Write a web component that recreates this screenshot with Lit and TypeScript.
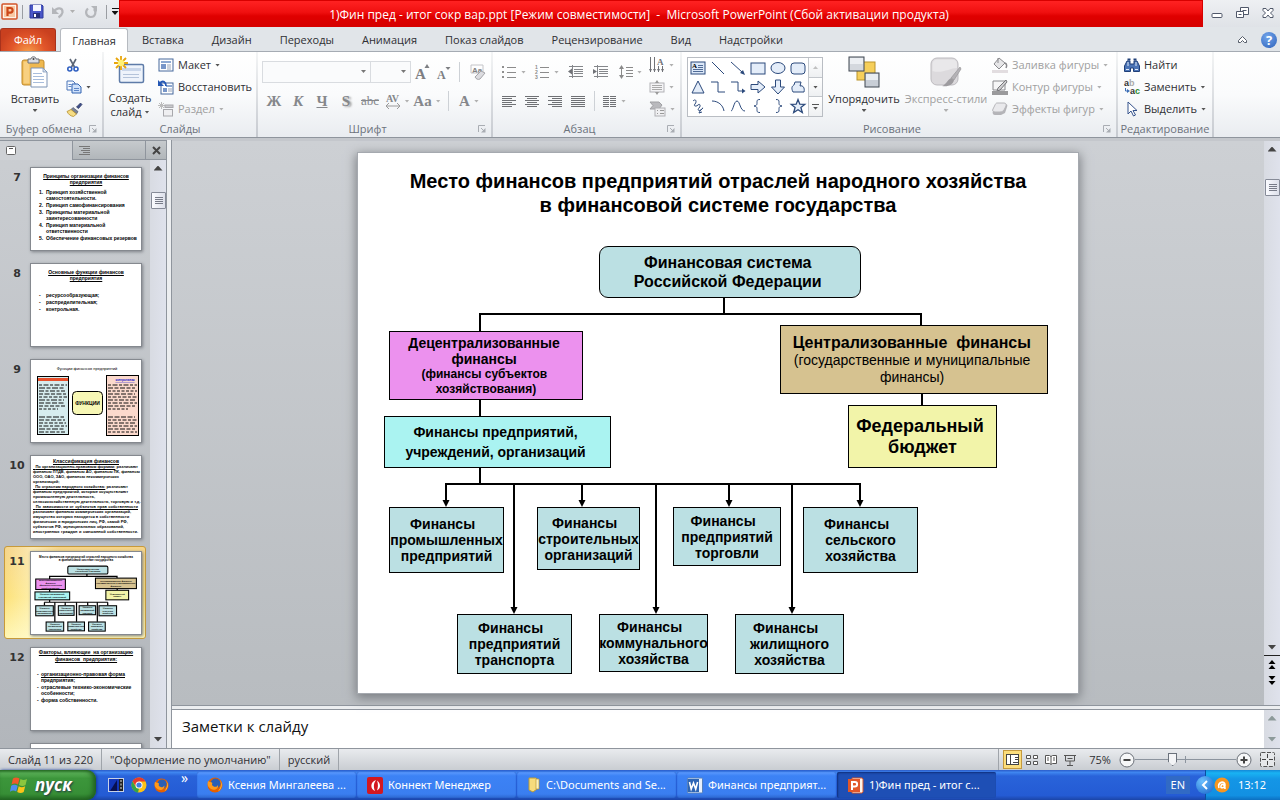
import { LitElement, html, svg, css } from "lit";
import { customElement } from "lit/decorators.js";
import { classMap } from "lit/directives/class-map.js";

const ic = (w: number, h: number, body: unknown) =>
  html`<svg class="ic" width=${w} height=${h} viewBox="0 0 ${w} ${h}" aria-hidden="true">${body}</svg>`;
const caret = html`<i class="caret"></i>`;

/* ---------- slide diagram data, in slide units (720 x 540) ---------- */
interface Node { x: number; y: number; w: number; h: number; kind: string; fill: string; lines: [string, string][]; }
const T = "#bbe0e3";
const leaf = (x: number, y: number, w: number, h: number, a: string, b: string): Node =>
  ({ x, y, w, h, kind: "leaf", fill: T, lines: [["Финансы  ", "l14"], [a, "l14"], [b, "l14"]] });
const NODES: Node[] = [
  { x: 241, y: 93, w: 262, h: 52, kind: "root", fill: T, lines: [["Финансовая система ", "l16"], ["Российской Федерации ", "l16"]] },
  { x: 31, y: 178, w: 194, h: 69, kind: "dec", fill: "#ec91ee", lines: [["Децентрализованные ", "l14"], ["финансы ", "l14"], ["(финансы субъектов ", "l12"], ["хозяйствования)", "l12"]] },
  { x: 422, y: 172, w: 268, h: 69, kind: "cen", fill: "#d6c290", lines: [["Централизованные  финансы ", "l16"], ["(государственные и муниципальные ", "l14n"], ["финансы) ", "l14n"]] },
  { x: 26, y: 263, w: 227, h: 52, kind: "ent", fill: "#aaf3f1", lines: [["Финансы предприятий, ", "l14w"], ["учреждений, организаций ", "l14w"]] },
  { x: 490, y: 252, w: 149, h: 63, kind: "fed", fill: "#f2f4a9", lines: [["Федеральный ", "l18"], ["бюджет", "l18"]] },
  leaf(31, 354, 115, 66, "промышленных", "предприятий"),
  leaf(179, 354, 103, 63, "строительных", "организаций"),
  leaf(315, 354, 108, 59, "предприятий", "торговли"),
  leaf(445, 354, 115, 66, "сельского", "хозяйства"),
  leaf(99, 461, 115, 60, "предприятий", "транспорта"),
  leaf(241, 461, 109, 58, "коммунального", "хозяйства"),
  leaf(377, 461, 109, 60, "жилищного", "хозяйства"),
];
const ARROWS: [number, number][] = [[88, 354], [224, 354], [371, 354], [502, 354], [156, 461], [298, 461], [434, 461]];
const LINKS = "M366 145V161M122 178V161H563V172M564 241V252M122 247V263M122 315V331M87 331H503";
const TITLE = ["Место финансов предприятий отраслей народного хозяйства", "в финансовой системе государства"];

const connectors = (sw: number) => svg`
  <path d=${LINKS} fill="none" stroke="#000" stroke-width=${sw}/>
  ${ARROWS.map(([x, y]) => svg`<path d="M${x} 331V${y - 5}" fill="none" stroke="#000" stroke-width=${sw}/>
  <path d="M${x - 3 - sw / 4} ${y - 7}h${6 + sw / 2}L${x} ${y}z"/>`)}`;

/* ---------- icons ---------- */
const G = "#9a9a9a";
const pptLogo = ic(17, 17, svg`<rect x="1" y="1" width="15" height="15" rx="1" fill="#fff3e8" stroke="#d2552a" stroke-width="1.500"/><rect x="3" y="3" width="11" height="11" fill="#f9c9a4"/><path d="M6.500 13V5h2.800a2.300 2.300 0 0 1 0 4.600H6.500" fill="none" stroke="#cc4718" stroke-width="2.200"/>`);
const pptTask = ic(17, 17, svg`<path d="M5 1h10l1 1v13l-1 1H5z" fill="#fff3e8" stroke="#d2552a"/><rect x="1" y="2" width="12" height="13" fill="#e2572a"/><path d="M5 13V5h2.800a2.300 2.300 0 0 1 0 4.600H5" fill="none" stroke="#fff" stroke-width="2"/>`);
const save = ic(15, 15, svg`<path d="M1 1h12l1 1v12H1z" fill="#4a57c8" stroke="#2e3a9c"/><rect x="4" y="1" width="8" height="6" fill="#f4f6ff"/><rect x="4" y="9" width="7" height="5" fill="#27307c"/><rect x="5" y="10" width="2" height="3" fill="#fff"/>`);
const undo = ic(14, 14, svg`<path d="M3 6.500C6 2 12 2.500 11.500 7.500 11 10 9 11.500 7.500 12.500" fill="none" stroke="#b4b6ba" stroke-width="2.200"/><path d="M1 2v7h7z" fill="#b4b6ba"/>`);
const redo = ic(14, 14, svg`<path d="M4 3.500C1 6 1.500 11.500 6.500 12c5 .3 6-5 3.500-8" fill="none" stroke="#b4b6ba" stroke-width="2.200"/><path d="M7 1h6v6z" fill="#b4b6ba"/>`);
const paste = ic(28, 32, svg`<rect x="1" y="4" width="22" height="25" rx="2" fill="#efb84e" stroke="#c08a2c"/><rect x="2.500" y="5.500" width="6" height="22" fill="#f8d081"/><path d="M7 3h3c0-3 5-3 5 0h3v4H7z" fill="#d9dce2" stroke="#6c7078"/><circle cx="12.500" cy="3" r="1" fill="#444"/><path d="M10 12h12l4 4v15H10z" fill="#fff" stroke="#7d93b5"/><path d="M12 17.500h9M12 20.500h11M12 23.500h11M12 26.500h11" stroke="#a8bddc"/><path d="M22 12v4h4z" fill="#d5e0f0" stroke="#7d93b5" stroke-width=".7"/>`);
const cut = ic(14, 14, svg`<path d="M4 1l4.500 8M10 1L5.500 9" stroke="#5b6575" stroke-width="1.600" fill="none"/><circle cx="3.800" cy="11" r="2" fill="none" stroke="#2f5fc0" stroke-width="1.600"/><circle cx="10" cy="11" r="2" fill="none" stroke="#2f5fc0" stroke-width="1.600"/>`);
const copy = ic(16, 14, svg`<path d="M1 1h6l2 2v7H1z" fill="#f3f8ff" stroke="#4b74b8"/><path d="M6 4h6l3 3v6H6z" fill="#cfe1fa" stroke="#3163b0"/><path d="M2.500 4.500h3M2.500 6.500h3M8 8.500h5M8 10.500h5" stroke="#5d86c8"/>`);
const brush = ic(17, 15, svg`<path d="M10.500 5l4-4 1.500 1.500-3.500 4z" fill="#3f4f8a" stroke="#27345e" stroke-width=".7"/><path d="M7 5.500l5 4-1.500 2.500L5 7.500z" fill="#7b8499" stroke="#444c60" stroke-width=".6"/><path d="M5 7.500l5.500 4.500-3 2.500c-3-.5-5-2-6.500-5z" fill="#f6dd84" stroke="#b48e2c" stroke-width=".8"/>`);
const newSlide = ic(32, 30, svg`<rect x="5.500" y="8.500" width="24" height="18" rx="1.500" fill="#eef3fb" stroke="#5e7ba8" stroke-width="1.500"/><path d="M8 12h19v3H8z" fill="#c9d6ea"/><path d="M9 18.500h16M9 21.500h16" stroke="#b4c3da"/><path d="M7 0v14M0 7h14M2 2l10 10M12 2L2 12" stroke="#e8a50c" stroke-width="1.800"/><circle cx="7" cy="7" r="3.200" fill="#fff176"/>`);
const layoutI = ic(16, 14, svg`<rect x="1" y="1" width="14" height="12" fill="#fff" stroke="#46689c"/><rect x="3" y="3" width="10" height="2" fill="#8ea9d2"/><rect x="3" y="6" width="5" height="5" fill="#7896c8"/><path d="M9 7h4M9 9h4M9 11h4" stroke="#9aa5b8"/>`);
const resetI = ic(16, 16, svg`<rect x="3" y="4" width="12" height="11" fill="#fff" stroke="#46689c"/><rect x="8" y="6" width="6" height="2" fill="#8ea9d2"/><rect x="5" y="9" width="4" height="4" fill="#7896c8"/><path d="M10 10h4M10 12h4" stroke="#9aa5b8"/><path d="M2 4c3-3 6-1 6 3" fill="none" stroke="#2457b4" stroke-width="1.800"/><path d="M0 1v6h6z" fill="#2457b4"/>`);
const sectionI = ic(16, 15, svg`<path d="M3.500 0v7M0 3.500h7M1 1l5 5M6 1L1 6" stroke="#bbb"/><rect x="7" y="3" width="8" height="2.500" fill="#c9c9cc" stroke="#a8a8ac"/><rect x="5.500" y="7.500" width="9" height="6.500" fill="#efeff1" stroke="#a8a8ac"/>`);
const growA = ic(15, 16, svg`<text x="0" y="15" font-family="Liberation Serif" font-weight="700" font-size="15" fill="#7d7f83">A</text><path d="M9.500 4L12 0l2.500 4z" fill="#7d7f83"/>`);
const shrinkA = ic(14, 16, svg`<text x="0" y="15" font-family="Liberation Serif" font-weight="700" font-size="12" fill="#7d7f83">A</text><path d="M8.500 3h5L11 6z" fill="#7d7f83"/>`);
const eraser = ic(17, 17, svg`<text x="2" y="9" font-family="Liberation Sans" font-size="8" font-weight="700" fill="#808080">Aa</text><path d="M1 1h12v8H1z" fill="none" stroke="#c4c4c8"/><path d="M5 13l6-6 4 2-5 6c-2 1-4 0-5-2z" fill="#dcdce0" stroke="#a4a4a8"/>`);
const listI = (num: boolean) => ic(15, 14, svg`${[2, 7, 12].map((y, i) => svg`${num ? svg`<text x="0" y=${y + 2} font-family="Liberation Sans" font-size="5" font-weight="700" fill="#8a8a8a">${i + 1}</text>` : svg`<rect x="0" y=${y - 1} width="2" height="2" fill="#909090"/>`}<path d="M5 ${y + 0.5}h9" stroke="#8c8c8c"/>`)}`);
const indentI = (right: boolean) => ic(16, 14, svg`<path d="M1 1.500h14M6 4.500h9M6 6.500h9M6 8.500h9M1 11.500h14M4.500 0v13" stroke="#85878b"/>${right ? svg`<path d="M0 4v5l4-2.500z" fill="#707277"/>` : svg`<path d="M4 3.500v6L0 6.500z" fill="#707277"/>`}`);
const spacingI = ic(15, 16, svg`<path d="M3.500 3v10" stroke="#8a8a8a"/><path d="M1 5l2.500-4L6 5zM1 11l2.500 4L6 11z" fill="#8a8a8a"/><path d="M8 3.500h7M8 6.500h7M8 9.500h7M8 12.500h7" stroke="#8a8a8a"/>`);
const dirI = ic(16, 16, svg`<path d="M1.500 0v15M5.500 0v15M9.500 9v6M13.500 9v6" stroke="#707277"/><path d="M0 12h3l-1.500 3zM4 12h3l-1.500 3zM8 12h3l-1.500 3zM12 12h3l-1.500 3z" fill="#707277"/><text x="8" y="8" font-family="Liberation Serif" font-size="9" font-weight="700" fill="#707277">A</text>`);
const valignI = ic(16, 15, svg`<rect x="1" y="3" width="14" height="9" fill="#f4f4f6" stroke="#b2b2b6"/><path d="M3 5.500h10M3 7.500h10M3 9.500h10" stroke="#aaa"/><path d="M6 3l2-3 2 3zM6 12l2 3 2-3z" fill="#999"/>`);
const smartI = ic(17, 16, svg`<path d="M1 1h9l3 3-3 4H1l3-3.500z" fill="#b9b9bd" stroke="#a0a0a4"/><rect x="6" y="7" width="10" height="8" fill="#efeff1" stroke="#b0b0b4"/><path d="M8 9.500h1M11 9.500h4M8 12.500h1M11 12.500h4" stroke="#999"/>`);
const alignI = (a: number, b: number) => ic(15, 13, svg`${[0, 1, 2, 3, 4, 5].map((i) => svg`<path d="M${i % 2 ? a : 0} ${i * 2 + 1.5}H${i % 2 ? b : 14}" stroke="#6f7175"/>`)}`);
const colsI = ic(14, 13, svg`${[1, 3, 5, 7, 9, 11].map((y) => svg`<path d="M0 ${y + 0.5}h6M7 ${y + 0.5}h6" stroke="#6f7175"/>`)}`);
const S = "#2c4a7c";
const SHAPES = [
  svg`<rect x="1" y="2" width="14" height="12" fill="#dce8f8" stroke=${S}/><text x="2" y="8" font-size="7" font-weight="700" font-family="Liberation Serif">A</text><path d="M8 5.500h5M8 7.500h5M3 9.500h10M3 11.500h10" stroke=${S} stroke-width=".8"/>`,
  svg`<path d="M2 2l12 12" stroke=${S} fill="none"/>`,
  svg`<path d="M1 2l11 10" stroke=${S} fill="none"/><path d="M15 15l-5-2 3-3z" fill=${S}/>`,
  svg`<rect x="1" y="3" width="14" height="11" fill="#e4edf9" stroke=${S}/>`,
  svg`<ellipse cx="8" cy="8" rx="7" ry="5.500" fill="#e4edf9" stroke=${S}/>`,
  svg`<rect x="1" y="3" width="14" height="11" rx="3" fill="#e4edf9" stroke=${S}/>`,
  svg`<path d="M8 2l6 12H2z" fill="#e4edf9" stroke=${S}/>`,
  svg`<path d="M1 3h7v10h7" stroke=${S} fill="none"/>`,
  svg`<path d="M1 3h7v9h5" stroke=${S} fill="none"/><path d="M15.500 12L12 9.500v5z" fill=${S}/>`,
  svg`<path d="M1 5.500h7V2l7 6-7 6v-3.500H1z" fill="#e4edf9" stroke=${S}/>`,
  svg`<path d="M5.500 1v7H1.500l6.500 7 6.500-7h-4V1z" fill="#e4edf9" stroke=${S}/>`,
  svg`<path d="M5 3h6l-1 4c3-1 5 2 4 6H3C1 9 2 7 4 6z" fill="#e4edf9" stroke=${S}/>`,
  svg`<path d="M3 3c3-3 4 1 2 3s1 3 3 1 3 1 1 3 0 4 3 1-2 1-3 4l3-1" stroke=${S} fill="none"/>`,
  svg`<path d="M2 3c6 0 11 4 12 10" stroke=${S} fill="none"/>`,
  svg`<path d="M1 13C3 13 4 3 7 3s3 10 8 10" stroke=${S} fill="none"/>`,
  svg`<path d="M10 1.500c-3 0-3 1-3 3s0 3-3 3.500c3 .5 3 1.500 3 3.500s0 3 3 3" stroke=${S} fill="none"/>`,
  svg`<path d="M6 1.500c3 0 3 1 3 3s0 3 3 3.500c-3 .5-3 1.500-3 3.500s0 3-3 3" stroke=${S} fill="none"/>`,
  svg`<path d="M8 1.500l1.800 4.700 5 .2-3.900 3.100 1.400 5L8 11.700l-4.300 2.800 1.400-5L1.200 6.400l5-.2z" fill="#e4edf9" stroke=${S} stroke-width="1.300"/>`,
];
const arrange = ic(32, 32, svg`<rect x="9" y="6" width="18" height="18" fill="#f6cf5a" stroke="#b9932c"/><rect x="1" y="1" width="15" height="14" fill="#d4d8de" stroke="#3f4650"/><path d="M2 2h13v6H2z" fill="#eceff3"/><rect x="17" y="17" width="14" height="14" fill="#c8ced6" stroke="#3f4650"/><path d="M18 18h12v6H18z" fill="#e9edf2"/>`);
const express = ic(32, 32, svg`<rect x="1" y="2" width="27" height="27" rx="6" fill="#dcdadd" stroke="#bdbbbf"/><path d="M2.500 15C12 18 20 12 27 12V8c0-3-2-4.500-5-4.500H8c-4 0-5.500 2-5.500 5z" fill="#e9e8ea"/><path d="M30 11l-9 11 3 2 7-11z" fill="#b4b2b6" stroke="#98969a" stroke-width=".7"/><path d="M21 22l3 2c-1 5-6 7-12 6 4-1 5-6 9-8z" fill="#9d9b9f"/>`);
const fillI = ic(16, 16, svg`<path d="M7 1l6 5-6 6-5-5z" fill="#e6e6e8" stroke="#8a8a8e"/><path d="M13 6c2 1 2 3 1 5" stroke="#8a8a8e" stroke-width="1.500" fill="none"/><path d="M6 1v5" stroke="#8a8a8e"/><rect x="0" y="13" width="16" height="3" fill="#e2dde0"/>`);
const outlineI = ic(16, 16, svg`<path d="M1 2h12v9H1z" fill="#f6f6f7" stroke="#8a8a8e"/><path d="M14 1L6 9l-1 3 3-1 7-8z" fill="#d0d0d2" stroke="#77777b"/><rect x="0" y="12" width="16" height="4" fill="#9a9a9c"/>`);
const effectI = ic(16, 15, svg`<path d="M5 2h8c2 0 3 1 2 3l-2 6-4 2H3c-2 0-3-2-2-4z" fill="#b4b4b8"/><path d="M5 1h7c2 0 2.500 1.500 2 3l-2 4c-1 1-2 2-4 2H3C1 10 0 8.500 1 7l2-4c.5-1 1-2 2-2z" fill="#e9e9ec" stroke="#b6b6ba"/>`);
const find = ic(16, 15, svg`<path d="M3 3h3v3h4V3h3l2.500 5v5.500h-6V10h-3v3.500h-6V8z" fill="#4b74b6" stroke="#1f3f78"/><path d="M3.500 1.500h3M9.500 1.500h3" stroke="#1f3f78" stroke-width="2"/><path d="M2 11.500h3M11 11.500h3M4 4v4M12 4v4" stroke="#dfe9f8"/>`);
const replace = ic(16, 16, svg`<text x="0" y="7" font-size="9" font-weight="700" font-family="Liberation Sans" fill="#333">a<tspan fill="#aaa">b</tspan></text><text x="6" y="15" font-size="9" font-weight="700" font-family="Liberation Sans" fill="#333">a<tspan fill="#2c8b2c">c</tspan></text><path d="M1.500 9v3h2" stroke="#3b6db5" fill="none"/><path d="M3 10v4l3-2z" fill="#3b6db5"/>`);
const pointer = ic(16, 16, svg`<path d="M4 1v12l3-3 2.500 5 2-1L9 9.500h4z" fill="#fff" stroke="#35528c"/>`);
const launch = html`<button class="launch" aria-label="Параметры">${ic(8, 8, svg`<path d="M.5 7V.500H7" fill="none" stroke="#a9adb3"/><path d="M3 3l3 3" stroke="#a9adb3"/><path d="M7.500 3v4.500H3z" fill="#a9adb3"/>`)}</button>`;
const firefox = (s: number) => html`<svg class="ic" width=${s} height=${s} viewBox="0 0 16 16"><circle cx="8" cy="8" r="7.500" fill="#e66000"/><circle cx="8.500" cy="6.500" r="5" fill="#2a5fb4"/><path d="M1 4c1 1 3 1 4 1.500 1 1-1 2 1 3.500s4 1 5-1c1 4-4 6-7 4S0 8 1 4z" fill="#ff9a1a"/><path d="M13 3c3 4 2 9-2 11.500 3-4 4-7 2-11.500z" fill="#ffc63a"/></svg>`;
const chrome = ic(16, 16, svg`<circle cx="8" cy="8" r="7.500" fill="#fbc116"/><path d="M1.500 4.200A7.500 7.500 0 0 1 14.500 4.500H8L5 9.500z" fill="#e33b2e"/><path d="M1.500 4.200l4 7L8 11.500l-1 4A7.500 7.500 0 0 1 1.500 4.200z" fill="#34a349"/><circle cx="8" cy="8" r="3.500" fill="#fff"/><circle cx="8" cy="8" r="2.600" fill="#3f7de0"/>`);
const film = ic(16, 14, svg`<rect width="16" height="14" fill="#c8d2e8"/><rect x="1" y="1" width="10" height="12" fill="#1235b8"/><path d="M2 13L9 2v11z" fill="#081050"/><path d="M11 1h4v12h-4z" fill="#222"/><path d="M13 2v10" stroke="#ddd" stroke-dasharray="2 1.500"/>`);
const connect = ic(16, 17, svg`<rect width="16" height="17" rx="2" fill="#d31820"/><path d="M9 3C3 5 3 12 8 14 6 9 7 6 9 3zM10 13.500c4-2 4-7 0-10 1.500 4 1 7 0 10z" fill="#fff"/>`);
const folder = ic(14, 16, svg`<path d="M2 1h7l1 1v10l-4 3-4-2z" fill="#f7dc7c" stroke="#b99a38"/><path d="M9 2h3v10H9z" fill="#fdf2bc" stroke="#b99a38" stroke-width=".7"/>`);
const word = ic(16, 17, svg`<rect x=".5" y="1" width="15" height="15" rx="1" fill="#e6f0fc" stroke="#5580bb"/><rect x="1" y="2" width="11" height="13" fill="#2d66b6"/><path d="M2.500 5l1.700 7L6.500 6l2.200 6 1.900-7" fill="none" stroke="#fff" stroke-width="1.600"/>`);
const flag = ic(20, 19, svg`<path d="M3 2.500c2-1.500 4-1.500 6.500 0L8 8.500c-2-1.200-4-1.200-6.500 0z" fill="#f0592a"/><path d="M10.500 3c2 1.200 4 1.200 6.500 0L15.500 9c-2 1.200-4 1.200-6.500 0z" fill="#8cc63e"/><path d="M1.200 9.800c2-1.300 4-1.300 6.500 0L6.200 15.500c-2-1.200-4-1.200-6.200.2z" fill="#4f8df0"/><path d="M8.700 10.300c2 1.200 4 1.200 6.500 0L13.700 16c-2 1.200-4 1.200-6.500 0z" fill="#fcc419"/>`);

const dashes = (x: number, y: number, w: number, n: number, seed: number) =>
  svg`${Array.from({ length: n }, (_, i) => svg`<path d="M${x} ${y + i * 3 + (i > 8 ? 5 : 0)}h${w - ((i * seed) % 4) - (i === 8 ? 9 : 0)}" stroke="#111" stroke-width="1" stroke-dasharray="${3 + ((i * seed) % 4)} 1.500 ${5 - (i % 3)} 1.500"/>`)}`;

/* Lines of slide 10: text, stretched to the full width, underlined lead */
const LINES10: [string, boolean, string?][] = [
  ["различают", true, "По организационно-правовым формам:"],
  ["финансы ПТДВ, финансы АО, финансы ПК, финансы", true],
  ["ООО, ОАО, ЗАО, финансы некоммерческих", false],
  ["организаций;", false],
  ["различают", false, "По отраслям народного хозяйства:"],
  ["финансы предприятий, которые осуществляют", false],
  ["промышленную деятельность,", false],
  ["сельскохозяйственную деятельность, торговую и т.д.", true],
  ["", true, "По зависимости от субъектов прав собственности"],
  ["различают финансы коммерческих организаций,", false],
  ["имущество которых находится в собственности", false],
  ["физических и юридических лиц, РФ, самой РФ,", false],
  ["субъектов РФ, муниципальных образований,", false],
  ["иностранных граждан и смешанной собственности.", true],
];

@customElement("app-root")
export class AppRoot extends LitElement {
  static styles = css`
    :host { display: flex; flex-direction: column; height: 100vh; overflow: hidden; font: 11px/16px "Open Sans", "Noto Sans", sans-serif; color: #2f2f33; background: #e3e6ea; }
    * { box-sizing: border-box; }
    button, select, input { font: inherit; color: inherit; border: 0; padding: 0; margin: 0; background: none; }
    button { display: flex; align-items: center; justify-content: center; white-space: nowrap; }
    .ic { display: block; flex: none; overflow: visible; }
    .caret { display: block; flex: none; width: 5px; height: 3px; background: #555; clip-path: polygon(0 0, 100% 0, 50% 100%); }
    .off { color: #a0a0a0; }
    .off .caret { background: #b0b0b0; }

    .title { display: flex; flex: none; height: 27px; background: linear-gradient(#eef0f3, #dfe2e7); }
    .qat { display: flex; align-items: center; flex: none; width: 119px; padding: 0 0 4px 1px; }
    .vr { width: 1px; height: 14px; background: #9a9da2; flex: none; margin: 0 6px 0 4px; }
    .qat .undo { margin-left: 7px; }
    .qat .dd { margin: 0 9px 0 5px; }
    .qat .end { margin: 0 4px 0 8px; }
    .more { display: flex; flex-direction: column; align-items: center; gap: 2px; width: 8px; }
    .more::before { content: ""; width: 7px; height: 1px; background: #111; }
    .more .caret { background: #111; width: 7px; height: 4px; }
    .red { flex: 1; margin: 0; display: flex; align-items: center; justify-content: center; background: linear-gradient(#ff2222, #f01010 45%, #e00000 60%, #d60000); color: #fff; font-size: 12px; font-weight: 400; padding: 3px 44px 0 0; white-space: pre; border: 1px solid #d80000; }
    .win { display: flex; align-items: center; gap: 13px; width: 77px; flex: none; padding: 0 0 2px 8px; }

    .tabs { display: flex; flex: none; height: 25px; padding-top: 1px; border-bottom: 1px solid #a5abb3; background: #e1e5e9; align-items: stretch; }
    .tabs button { padding: 0 14px; }
    .tabs .file { width: 56px; margin-right: 4px; padding: 0; color: #fff; border-radius: 3px 3px 0 0; border: 1px solid #a8321c; border-bottom: 0; background: radial-gradient(ellipse at 50% 110%, #f7a04a, #e2562a 45%, #c9401f 80%); }
    .tabs .on { width: 68px; padding: 0; border: 1px solid #b6bac0; border-bottom: 0; border-radius: 3px 3px 0 0; background: #fff; margin-bottom: -1px; }
    .tabs .right { margin-left: auto; display: flex; align-items: center; gap: 14px; padding-right: 3px; }
    .tabs .right button { padding: 0; }
    .help { width: 16px; height: 16px; border-radius: 50%; background: radial-gradient(circle at 40% 30%, #72a4ea, #2d62bb); color: #fff; font-weight: 700; font-size: 13px; }

    .ribbon { display: flex; flex: none; height: 86px; background: linear-gradient(#fff, #fafbfc 50%, #e9ecf0); border-bottom: 1px solid #8f959d; }
    .group { display: flex; flex-direction: column; border: solid #d3d6da; border-width: 0 2px 0 0; border-image: linear-gradient(#f4f5f6, #c6cad0) 1; flex: none; }
    .body { display: flex; height: 68px; padding-top: 2px; }
    .foot { display: flex; align-items: center; height: 17px; color: #6c727c; padding: 0 2px; }
    .foot span { flex: 1; text-align: center; white-space: nowrap; }
    .launch { width: 14px; height: 14px; }
    .big { flex-direction: column; justify-content: flex-start; padding-top: 2px; line-height: 14px; }
    .big .ic { margin-bottom: 4px; }
    .big .caret { margin-top: 3px; }
    .big .row { display: flex; align-items: center; gap: 3px; }
    .big .row .caret { margin: 0; }
    .col { display: flex; flex-direction: column; }
    .col button { height: 22px; justify-content: flex-start; gap: 4px; }
    .g1 { width: 104px; } .g2 { width: 154px; } .g3 { width: 235px; } .g4 { width: 189px; } .g5 { width: 436px; } .g6 { width: 96px; }
    .g1 .big { width: 62px; margin-left: 4px; }
    .g2 .big { width: 44px; margin: 0 6px 0 4px; }
    .g2 .big .ic { margin-bottom: 5px; }
    .g3 .body { padding-left: 4px; }
    .font, .para { display: flex; flex-direction: column; }
    .r { display: flex; align-items: center; height: 30px; }
    .r button { height: 22px; gap: 4px; }
    .top { padding-top: 4px; height: 32px; }
    .combo { position: relative; display: block; height: 22px; border: 1px solid #d9dce0; background: #fafbfc; }
    .combo select { appearance: none; width: 100%; height: 100%; }
    .combo .caret { position: absolute; right: 4px; top: 8px; background: #777; }
    .fam { width: 109px; }
    .siz { width: 41px; margin-left: -1px; }
    .sep { width: 1px; height: 20px; background: #cdd1d6; }
    .font .top button { width: 22px; }
    .font .top .sep { margin: 0 7px 0 4px; }
    .fmt button { width: 24px; color: #85878b; font: bold 15px/20px "Liberation Serif", serif; }
    .fmt .w { width: 30px; }
    .fmt .sep { margin: 0 5px 0 6px; }
    .av { display: flex; flex-direction: column; align-items: center; font-size: 10px; line-height: 9px; }
    .sh { text-shadow: 2px 1px 2px #999; }
    .strike { text-decoration: line-through; font-size: 13px; font-weight: 400; }
    .g4 .body { justify-content: space-between; padding-right: 5px; }
    .para { padding-left: 9px; }
    .para .top { gap: 9px; }
    .al { gap: 8px; }
    .gal { display: flex; width: 136px; height: 60px; border: 1px solid #b9bdc3; background: #fff; margin: 3px 0 0 5px; }
    .shapes { display: grid; grid-template-columns: repeat(6, 20px); grid-auto-rows: 19px; flex: 1; }
    .shapes button { width: 20px; }
    .gs { display: flex; flex-direction: column; width: 14px; border-left: 1px solid #c3c7cc; }
    .gs button { flex: 1; border-bottom: 1px solid #c3c7cc; background: linear-gradient(#fff, #eef0f2); }
    .gs button:last-child { border-bottom: 0; flex-direction: column; gap: 2px; }
    .gs button:last-child::before { content: ""; width: 7px; height: 1px; background: #555; }
    .gs .up .caret { transform: rotate(180deg); background: #c0c0c0; }
    .arr { width: 82px; }
    .exp { width: 82px; margin-right: 5px; }
    .g6 .body { padding-left: 6px; }

    .work { display: flex; flex: 1; min-height: 0; border-top: 2px solid #c4c7cc; }
    .panel { width: 166px; flex: none; display: flex; flex-direction: column; background: linear-gradient(#cbced2, #b2b6bb); }
    .ptabs { display: flex; height: 20px; flex: none; border-top: 1px solid #8f959d; background: linear-gradient(#c6cacd, #b0b5b9); }
    .ptabs button { width: 73px; border-right: 1px solid #8f959d; border-bottom: 1px solid #8f959d; justify-content: flex-start; padding-left: 6px; }
    .ptabs .a { background: #ced1d5; border-bottom: 0; }
    .ptabs .x { border-right: 0; flex: 1; }
    .plist { display: flex; flex: 1; min-height: 0; }
    .thumbs { flex: 1; overflow: hidden; margin: 0; padding: 2px 4px 0; list-style: none; }
    .thumbs li { display: flex; height: 93px; margin-bottom: 3px; border: 1px solid transparent; border-radius: 3px; padding: 4px 3px 0 0; justify-content: space-between; }
    .thumbs li.sel { border: 1px solid #c79a3a; background: linear-gradient(90deg, rgba(255,255,255,0), rgba(255,252,220,.5) 20%, rgba(255,255,255,0) 40%), linear-gradient(#f5d48a, #fde27a 55%, #fff6b4); }
    .num { width: 24px; text-align: center; font: bold 11px/22px "DejaVu Sans", sans-serif; color: #333; }
    .th { width: 112px; height: 84px; background: #fff; border: 1px solid #85898f; box-shadow: 1px 1px 3px #7d8187; overflow: hidden; color: #000; font-family: "Liberation Sans", sans-serif; }
    .th svg { display: block; width: 110px; height: 82px; }
    .tt { margin: 5px 2px 2px; font-size: 5px; line-height: 6px; text-align: center; text-decoration: underline; white-space: pre; font-weight: 700; }
    .tt.t10 { margin: 2px 0 0; }
    .tt.t12 { margin-top: 1px; line-height: 7px; }
    .t5 { font-size: 5px; line-height: 6px; display: grid; grid-template-columns: 7px 1fr; margin: 4px 0 0 8px; white-space: pre; row-gap: 1px; font-weight: 700; }
    .t5.gap { margin-top: 11px; }
    .t5.gap12 { margin: 8px 0 0 6px; grid-template-columns: 4px 1fr; }
    .t4 { font-size: 4px; line-height: 5px; margin: 0 3px 0 2px; white-space: nowrap; font-weight: 700; }
    .t4 .full { text-align-last: justify; }
    .u { text-decoration: underline; }

    .sb { width: 16px; flex: none; display: flex; flex-direction: column; align-items: center; background: linear-gradient(90deg, #d8dbe2, #dfe2ec); padding: 4px 0 5px; }
    .sb.main-sb { padding-bottom: 0; }
    .sb button { width: 16px; height: 8px; }
    .sb .t { background: #444; width: 9px; height: 5px; clip-path: polygon(0 0, 100% 0, 50% 100%); }
    .sb .t.up { clip-path: polygon(0 100%, 100% 100%, 50% 0); }
    .sb.dim .t { background: #8d9a9a; }
    .grip { width: 15px; height: 17px; margin-top: 20px; border: 1px solid #868b98; border-radius: 1px; background: linear-gradient(90deg, #fafbff, #dde0ea); display: flex; flex-direction: column; justify-content: center; gap: 1px; padding-left: 3px; }
    .main-sb .grip { margin-top: 26px; }
    .grip i { width: 8px; height: 1px; background: #777b88; }
    .grow { flex: 1; }
    .vsplit { width: 6px; flex: none; background: #eceef0; border: 1px solid #8f959d; border-width: 0 1px; }
    .main { flex: 1; display: flex; flex-direction: column; min-width: 0; }
    .stage { flex: 1; display: flex; min-height: 0; border-top: 1px solid #c4c7cc; }
    .canvas { flex: 1; display: flex; align-items: center; justify-content: center; background: linear-gradient(#cdd0d4, #b8bcc0); }
    .slide { position: relative; width: 720px; aspect-ratio: 4 / 3; flex: none; background: #fff; outline: 1px solid #a5a9af; box-shadow: 0 3px 10px 2px #7b7e83; color: #000; font-family: "Liberation Sans", Arial, sans-serif; }
    .slide h1 { margin: 0; padding-top: 16px; text-align: center; font-size: 20px; line-height: 24px; font-weight: 700; white-space: pre; }
    .wires { position: absolute; inset: 0; width: 100%; height: 100%; }
    .node { position: absolute; border: 1px solid #000; display: flex; flex-direction: column; align-items: center; justify-content: center; white-space: pre; font-weight: 700; }
    .node.root { border-radius: 9px; }
    .l14 { font-size: 14px; line-height: 16px; }
    .l16 { font-size: 16px; line-height: 19px; }
    .l12 { font-size: 12px; line-height: 15px; }
    .l14n { font-size: 14px; line-height: 17px; font-weight: 400; }
    .l14w { font-size: 14px; line-height: 20px; }
    .l18 { font-size: 18px; line-height: 21px; }
    .pages { width: 100%; display: flex; flex-direction: column; align-items: center; gap: 8px; border-top: 1px solid #222; margin-top: 4px; padding: 5px 0 20px; }
    .hsplit { height: 5px; flex: none; background: #eceef0; border: 1px solid #8f959d; border-width: 1px 0; }
    .notes { flex: none; height: 38px; display: flex; background: #fff; }
    .notes p { flex: 1; margin: 0; padding: 6px 10px; font-size: 15px; line-height: 20px; color: #111; }

    .status { display: flex; flex: none; height: 22px; align-items: stretch; border-top: 1px solid #8f959d; background: linear-gradient(#e9ebee, #c9cdd2); }
    .status > span { padding: 2px 8px 0; border-right: 1px solid #9fa4aa; line-height: 17px; white-space: nowrap; }
    .status .views { margin-left: auto; display: flex; border-left: 1px solid #9fa4aa; padding: 0 5px 0 4px; align-items: center; }
    .views button { width: 19px; height: 19px; }
    .views .on { border: 1px solid #c59a3e; background: #fbdd7c; }
    .views output { width: 32px; text-align: center; margin: 0 3px 0 5px; }
    .views .zb, .views .fit { width: 16px; height: 16px; }
    .views .fit { margin-left: 7px; }
    input.zoom { appearance: none; width: 101px; height: 16px; background: linear-gradient(#8c949e, #8c949e) center / 100% 1px no-repeat, linear-gradient(#8c949e, #8c949e) 50px center / 1px 7px no-repeat; }
    input.zoom::-webkit-slider-thumb { appearance: none; width: 9px; height: 13px; background: #6a717b; clip-path: polygon(0 0, 100% 0, 100% 65%, 50% 100%, 0 65%); border: 1px solid #6a717b; box-shadow: inset 0 0 0 8px #f4f5f7; }

    .task { display: flex; flex: none; height: 30px; color: #fff; background: linear-gradient(#2a5bc9, #3f86f0 8%, #2963da 20%, #245bd4 85%, #1b45a8); font: 11px/16px "Noto Sans", sans-serif; align-items: stretch; }
    .start { width: 96px; flex: none; gap: 5px; padding: 0 14px 0 0; border-radius: 0 9px 9px 0; background: linear-gradient(#2f7a2d, #59b056 10%, #3c963b 28%, #378f36 80%, #246b24); box-shadow: inset -3px 0 5px #1f5d1f, 1px 0 3px #12389a; font: italic bold 17px/24px "Open Sans", sans-serif; text-shadow: 1px 1px 2px #234; }
    .quick { display: flex; align-items: center; width: 101px; gap: 7px; padding-left: 12px; flex: none; }
    .quick span { font-size: 14px; align-self: flex-start; line-height: 16px; margin-left: 5px; }
    .apps { display: flex; gap: 1px; flex: 1; align-items: center; }
    .apps button { width: 159px; height: 26px; gap: 5px; justify-content: flex-start; padding-left: 10px; border-radius: 2px; background: linear-gradient(#5c9bff, #3c82f5 15%, #3a7ef0 85%, #2c66cf); box-shadow: inset 0 0 1px #1d48a8; }
    .apps .on { background: #1e4fb5; box-shadow: inset 1px 1px 2px #0f2f7a; }
    .lang { align-self: center; background: #316ac5; padding: 0 5px; margin-right: 15px; line-height: 18px; }
    .tray { width: 75px; flex: none; display: flex; align-items: center; background: linear-gradient(#1488d8, #19b3f3 10%, #1496e6 30%, #1290e2 85%, #0c6fc0); border-left: 1px solid #0a4fa0; }
    .tray .back { width: 18px; height: 18px; border-radius: 50%; background: radial-gradient(circle at 35% 30%, #6cc0ff, #1560c8); margin-left: -10px; flex: none; }
    .tray time { margin-left: 8px; }
  `;

  private btn(label: unknown, name: string, off = false) {
    return html`<button aria-label=${name} class=${classMap({ off })}>${label}</button>`;
  }

  private get ribbon() {
    return html`<div class="ribbon">
      <section class="group g1"><div class="body">
        <button class="big">${paste}Вставить${caret}</button>
        <div class="col">${this.btn(cut, "Вырезать")}${this.btn([copy, caret], "Копировать")}${this.btn(brush, "Формат по образцу")}</div>
      </div><div class="foot"><span>Буфер обмена</span>${launch}</div></section>
      <section class="group g2"><div class="body">
        <button class="big">${newSlide}Создать<span class="row">слайд${caret}</span></button>
        <div class="col"><button>${layoutI}Макет${caret}</button><button>${resetI}Восстановить</button><button class="off">${sectionI}Раздел${caret}</button></div>
      </div><div class="foot"><span>Слайды</span></div></section>
      <section class="group g3"><div class="body font off">
        <div class="r top">
          <label class="combo fam"><select aria-label="Шрифт" disabled></select>${caret}</label><label class="combo siz"><select aria-label="Размер шрифта" disabled></select>${caret}</label>
          ${this.btn(growA, "Увеличить размер")}${this.btn(shrinkA, "Уменьшить размер")}<i class="sep"></i>${this.btn(eraser, "Очистить формат")}
        </div>
        <div class="r fmt">
          <button>Ж</button><button><em>К</em></button><button><u>Ч</u></button><button class="sh">S</button><button><span class="strike">abc</span></button>
          <button class="w"><span class="av">AV${ic(16, 6, svg`<path d="M1 3h14M4 0L1 3l3 3M12 0l3 3-3 3" fill="none" stroke=${G}/>`)}</span>${caret}</button>
          <button class="w">Aa${caret}</button><i class="sep"></i><button class="w">A${caret}</button>
        </div>
      </div><div class="foot"><span>Шрифт</span>${launch}</div></section>
      <section class="group g4"><div class="body off">
        <div class="para">
          <div class="r top">${this.btn([listI(false), caret], "Маркеры")}${this.btn([listI(true), caret], "Нумерация")}${this.btn(indentI(false), "Уменьшить отступ")}${this.btn(indentI(true), "Увеличить отступ")}${this.btn([spacingI, caret], "Интервал")}</div>
          <div class="r al">
            ${this.btn(alignI(0, 10), "По левому краю")}${this.btn(alignI(2, 12), "По центру")}${this.btn(alignI(4, 14), "По правому краю")}${this.btn(alignI(0, 14), "По ширине")}
            <i class="sep"></i>${this.btn([colsI, caret], "Колонки")}
          </div>
        </div>
        <div class="col">${this.btn([dirI, caret], "Направление текста")}${this.btn([valignI, caret], "Выровнять текст")}${this.btn([smartI, caret], "SmartArt")}</div>
      </div><div class="foot"><span>Абзац</span>${launch}</div></section>
      <section class="group g5"><div class="body">
        <div class="gal"><div class="shapes">${SHAPES.map((s) => this.btn(ic(16, 16, s), "Фигура"))}</div>
          <div class="gs"><button class="up" aria-label="Вверх">${caret}</button><button aria-label="Вниз">${caret}</button><button aria-label="Ещё">${caret}</button></div></div>
        <button class="big arr">${arrange}Упорядочить${caret}</button>
        <button class="big off exp">${express}Экспресс-стили${caret}</button>
        <div class="col"><button class="off">${fillI}Заливка фигуры${caret}</button><button class="off">${outlineI}Контур фигуры${caret}</button><button class="off">${effectI}Эффекты фигур${caret}</button></div>
      </div><div class="foot"><span>Рисование</span>${launch}</div></section>
      <section class="group g6"><div class="body">
        <div class="col"><button>${find}Найти</button><button>${replace}Заменить${caret}</button><button>${pointer}Выделить${caret}</button></div>
      </div><div class="foot"><span>Редактирование</span></div></section>
    </div>`;
  }

  private thumb(n: number) {
    if (n === 7)
      return html`<div class="tt">Принципы организации финансов
предприятия</div><div class="t5"><span>1.</span><span>Принцип хозяйственной
самостоятельности.</span><span>2.</span><span>Принцип самофинансирования</span><span>3.</span><span>Принципы материальной
заинтересованности</span><span>4.</span><span>Принцип материальной
ответственности</span><span>5.</span><span>Обеспечение финансовых резервов</span></div>`;
    if (n === 8)
      return html`<div class="tt">Основные функции финансов
предприятия</div><div class="t5 gap"><span>-</span><span>ресурсообразующая;</span><span>-</span><span>распределительная;</span><span>-</span><span>контрольная.</span></div>`;
    if (n === 9)
      return html`<svg viewBox="0 0 110 82"><g font-family="Liberation Sans" text-anchor="middle">
        <text x="56" y="10" font-size="4">Функции финансов предприятий</text>
        <rect x="6.500" y="16.500" width="31" height="58" fill="#d6ecee" stroke="#000"/><rect x="7" y="18" width="30" height="3" fill="#e8502c"/>
        ${dashes(8, 25, 28, 15, 3)}
        <rect x="75.500" y="15.500" width="32" height="60" fill="#fbd9cc" stroke="#000"/>
        <text x="94" y="21" font-size="3" fill="#11c" font-weight="700" text-decoration="underline">контрольная</text>
        ${dashes(77, 25, 29, 15, 2)}
        <rect x="41.500" y="31.500" width="30" height="23" rx="4" fill="#f7f7b5" stroke="#000"/><text x="56.500" y="45" font-size="5" font-weight="700">ФУНКЦИИ</text></g></svg>`;
    if (n === 10)
      return html`<div class="tt t10">Классификация финансов</div><div class="t4">${LINES10.map(([t, full, u]) => html`<div class=${classMap({ full })}>${u ? html`<span class="u">&nbsp; ${u}</span> ` : ""}${t}</div>`)}</div>`;
    if (n === 11)
      return html`<svg viewBox="0 0 720 540" preserveAspectRatio="none"><g font-family="Liberation Sans" font-weight="700" text-anchor="middle">
        ${TITLE.map((t, i) => svg`<text x="360" y=${38 + i * 24} font-size="20">${t}</text>`)}
        ${connectors(8)}
        ${NODES.map((n) => svg`<rect x=${n.x} y=${n.y} width=${n.w} height=${n.h} fill=${n.fill} stroke="#000" stroke-width="7" rx=${n.kind === "root" ? 9 : 0}/>
        ${n.lines.map(([t], i) => svg`<text x=${n.x + n.w / 2} y=${n.y + n.h / 2 + 5 + (i - (n.lines.length - 1) / 2) * 17} font-size="14">${t.trim()}</text>`)}`)}</g></svg>`;
    if (n === 12)
      return html`<div class="tt t12">Факторы, влияющие  на организацию
финансов  предприятия:</div><div class="t5 gap12"><span>-</span><span><span class="u">организационно-правовая форма</span>
предприятия;</span><span>-</span><span>отраслевые технико-экономические
особенности;</span><span>-</span><span>форма собственности.</span></div>`;
    return "";
  }

  private scroll(cls: string, grip: boolean, extra: unknown = "") {
    return html`<div class="sb ${cls}"><button aria-label="Вверх"><i class="t up"></i></button>${grip ? html`<div class="grip"><i></i><i></i><i></i><i></i></div>` : ""}<div class="grow"></div><button aria-label="Вниз"><i class="t"></i></button>${extra}</div>`;
  }

  render() {
    const dbl = (up: boolean) => ic(8, 10, up ? svg`<path d="M4 0l3.500 4h-7zM4 5l3.500 4h-7z"/>` : svg`<path d="M4 4l3.500-4h-7zM4 9l3.500-4h-7z"/>`);
    return html`
      <header class="title">
        <div class="qat">${pptLogo}<i class="vr"></i>${this.btn(save, "Сохранить")}<button class="undo" aria-label="Отменить">${undo}</button><button class="dd off" aria-label="Список отмен">${caret}</button>${this.btn(redo, "Повторить")}<i class="vr end"></i><button class="more" aria-label="Настройка панели">${caret}</button></div>
        <h2 class="red">1)Фин пред - итог сокр вар.ppt [Режим совместимости]  -  Microsoft PowerPoint (Сбой активации продукта)</h2>
        <div class="win">${this.btn(ic(12, 12, svg`<rect x="1" y="6.500" width="10" height="4" rx="1" fill="#fff" stroke="#50586a"/>`), "Свернуть")}${this.btn(ic(13, 12, svg`<path d="M4.500.500h8v7h-8z" fill="#fff" stroke="#50586a"/><path d="M.500 4.500h7v6h-7z" fill="#fff" stroke="#50586a"/><path d="M2.500 7.500h3M6.500 3.500h4" stroke="#50586a"/>`), "Восстановить")}${this.btn(ic(12, 10, svg`<path d="M1 .500h3l2 2.500 2-2.500h3v2L8.500 5 11 7.500v2H8L6 7 4 9.500H1v-2L3.500 5 1 2.500z" fill="#fff" stroke="#50586a"/>`), "Закрыть")}</div>
      </header>
      <nav class="tabs">
        <button class="file">Файл</button><button class="on">Главная</button>
        ${["Вставка", "Дизайн", "Переходы", "Анимация", "Показ слайдов", "Рецензирование", "Вид", "Надстройки"].map((t) => html`<button>${t}</button>`)}
        <div class="right">${this.btn(ic(9, 8, svg`<path d="M.500 4.500l4-4 4 4v2h-2l-2-2-2 2h-2z" fill="#fff" stroke="#555c68"/>`), "Свернуть ленту")}<button class="help" aria-label="Справка">?</button></div>
      </nav>
      ${this.ribbon}
      <main class="work">
        <aside class="panel">
          <div class="ptabs"><button class="a" aria-label="Слайды">${ic(10, 9, svg`<rect x=".5" y=".5" width="9" height="8" rx="1" fill="#fff" stroke="#666"/><path d="M3 2.500h4" stroke="#555"/>`)}</button><button aria-label="Структура">${ic(12, 9, svg`<path d="M0 .500h11M4 2.500h7M2 4.500h9M4 6.500h7M0 8.500h11" stroke="#777"/>`)}</button><button class="x" aria-label="Закрыть">${ic(9, 9, svg`<path d="M1 1l7 7M8 1L1 8" stroke="#444" stroke-width="2"/>`)}</button></div>
          <div class="plist">
            <ol class="thumbs">${[7, 8, 9, 10, 11, 12, 13].map((n) => html`<li class=${classMap({ sel: n === 11 })}><span class="num">${n < 13 ? n : ""}</span><div class="th">${this.thumb(n)}</div></li>`)}</ol>
            ${this.scroll("", true)}
          </div>
        </aside>
        <div class="vsplit"></div>
        <div class="main">
          <div class="stage">
            <div class="canvas"><article class="slide">
              <h1>${TITLE[0]}<br>${TITLE[1]}</h1>
              <svg class="wires" viewBox="0 0 720 540">${connectors(2)}</svg>
              ${NODES.map((n) => html`<div class="node ${n.kind}" style="left:${n.x}px;top:${n.y}px;width:${n.w}px;height:${n.h}px;background:${n.fill}">${n.lines.map(([t, c]) => html`<span class=${c}>${t}</span>`)}</div>`)}
            </article></div>
            ${this.scroll("main-sb", true, html`<div class="pages">${this.btn(dbl(true), "Предыдущий слайд")}${this.btn(dbl(false), "Следующий слайд")}</div>`)}
          </div>
          <div class="hsplit"></div>
          <div class="notes"><p>Заметки к слайду</p>${this.scroll("dim", false)}</div>
        </div>
      </main>
      <footer class="status">
        <span>Слайд 11 из 220</span><span>"Оформление по умолчанию"</span><span>русский</span>
        <div class="views">
          <button class="on" aria-label="Обычный">${ic(13, 12, svg`<rect x=".5" y=".5" width="12" height="10" fill="#fff" stroke="#444"/><path d="M4.500 1v10M9 3.500h3M9 5.500h3M7 8.500h5" stroke="#444"/>`)}</button>
          ${this.btn(ic(12, 10, svg`<path d="M.500.500h4v3h-4zM7.500.500h4v3h-4zM.500 6.500h4v3h-4zM7.500 6.500h4v3h-4z" fill="#fff" stroke="#555"/>`), "Сортировщик")}
          ${this.btn(ic(12, 11, svg`<path d="M.500 1.500h4l1.500 1 1.500-1h4v8h-4l-1.500 1-1.500-1h-4zM6 2v8M2 4h2M2 6h2M8 4h2M8 6h2" fill="#fff" stroke="#555"/>`), "Чтение")}
          ${this.btn(ic(12, 12, svg`<path d="M0 1.500h12M1.500 2v5h9V2M6 7v4M3 11.500h6M3.500 4.500h5" fill="none" stroke="#555"/>`), "Показ")}
          <output>75%</output>
          <button class="zb" aria-label="Уменьшить">${ic(16, 16, svg`<circle cx="8" cy="8" r="7" fill="#f6f7f8" stroke="#6a6f77"/><path d="M4.500 8h7" stroke="#444" stroke-width="2"/>`)}</button>
          <input class="zoom" type="range" aria-label="Масштаб" min="0" max="100" value="36">
          <button class="zb" aria-label="Увеличить">${ic(16, 16, svg`<circle cx="8" cy="8" r="7" fill="#f6f7f8" stroke="#6a6f77"/><path d="M4.500 8h7M8 4.500v7" stroke="#444" stroke-width="2"/>`)}</button>
          <button class="fit" aria-label="Вписать">${ic(15, 15, svg`<rect x=".5" y=".5" width="14" height="14" rx="1" fill="#e6e8ea" stroke="#555" stroke-dasharray="4 1.500"/><path d="M7.500 2v4M7.500 9v4M2 7.500h4M9 7.500h4" stroke="#444"/>`)}</button>
        </div>
      </footer>
      <footer class="task">
        <button class="start">${flag}пуск</button>
        <div class="quick">${film}${chrome}${firefox(15)}<span>»</span></div>
        <div class="apps">
          <button>${firefox(16)}Ксения Мингалеева ...</button><button>${connect}Коннект Менеджер</button><button>${folder}C:\\Documents and Se...</button><button>${word}Финансы предприят...</button><button class="on">${pptTask}1)Фин пред - итог с...</button>
        </div>
        <span class="lang">EN</span>
        <div class="tray"><button class="back" aria-label="Показать значки">${ic(8, 10, svg`<path d="M6 1L2 5l4 4" fill="none" stroke="#fff" stroke-width="2"/>`)}</button>${ic(16, 16, svg`<circle cx="8" cy="8" r="7.500" fill="#f8961e"/><path d="M5 11c-2-6 6-8 6-3 0 3-5 4-4 1s4-2 4 3" fill="none" stroke="#fff" stroke-width="1.600"/>`)}<time>13:12</time></div>
      </footer>`;
  }
}
